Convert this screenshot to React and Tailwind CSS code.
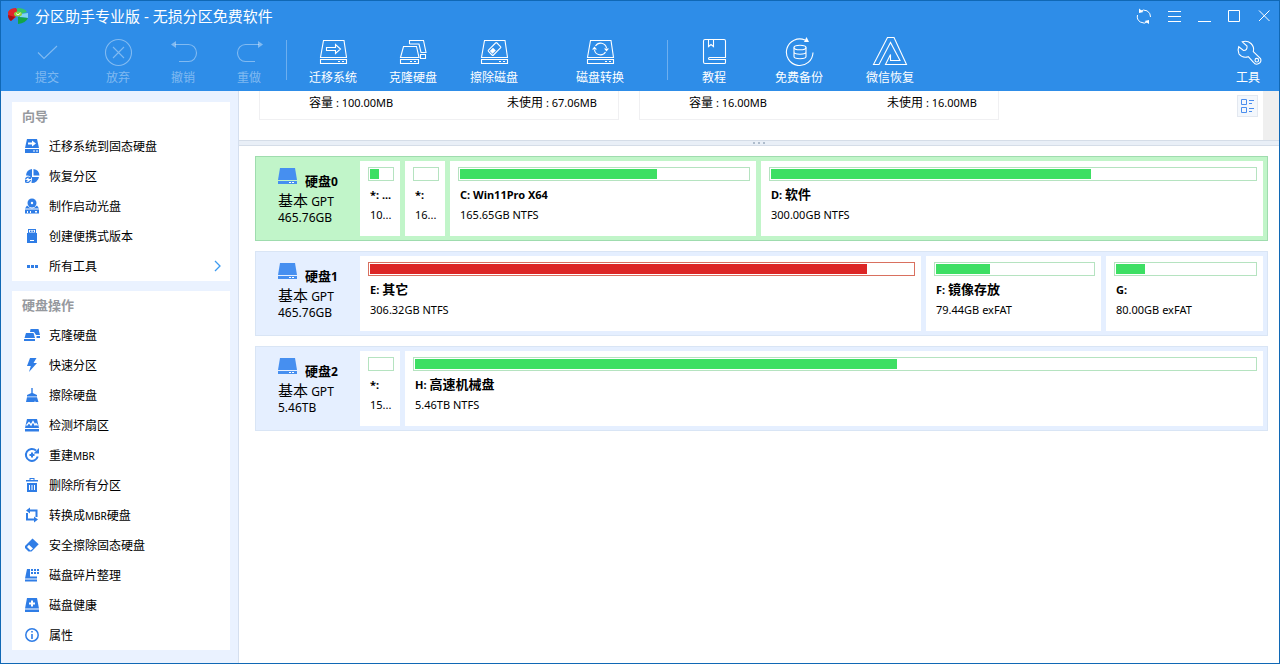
import clsx from 'clsx';

/* ---------- Toolbar icons (36x30 canvas) ---------- */

function ToolSvg({ children }) {
  return (
    <svg viewBox="0 0 36 30" className="h-[30px] w-9" fill="none" stroke="currentColor" strokeWidth="1.1" aria-hidden="true">
      {children}
    </svg>
  );
}

function DriveOutline() {
  return (
    <>
      <path d="M8.5 3.5H29L31.5 20.5H5.5Z" />
      <path d="M5.5 22.5H31.5V26.5H5.5Z" />
      <path d="M23 24.5H25M27 24.5H29" />
    </>
  );
}

const SubmitIcon = () => (
  <ToolSvg>
    <path d="M9 15.5L15 21.5L28 9" />
  </ToolSvg>
);

const DiscardIcon = () => (
  <ToolSvg>
    <circle cx="18.5" cy="15.5" r="13" />
    <path d="M13 10L24 21M24 10L13 21" />
  </ToolSvg>
);

const UndoIcon = () => (
  <ToolSvg>
    <path d="M10 7.5H23.5A8 8.5 0 0 1 23.5 24.5H14" />
    <path d="M6 7.5L11 4V11Z" fill="currentColor" stroke="none" />
  </ToolSvg>
);

const RedoIcon = () => (
  <ToolSvg>
    <path d="M28 7.5H14.5A8 8.5 0 0 0 14.5 24.5H24" />
    <path d="M32 7.5L27 4V11Z" fill="currentColor" stroke="none" />
  </ToolSvg>
);

const MigrateIcon = () => (
  <ToolSvg>
    <DriveOutline />
    <path d="M11.5 10.5H20.5V7.5L25.5 12L20.5 16.5V13.5H11.5Z" />
  </ToolSvg>
);

const CloneIcon = () => (
  <ToolSvg>
    <path d="M8.5 9.5H21.5L24 20.5H5.5Z" />
    <path d="M5.5 22.5H23.5V26.5H5.5Z" />
    <path d="M15 24.5H17M19 24.5H21" />
    <path d="M14.5 7V3.5H28.5L31 15.5H26L24 7H14.5" />
    <path d="M25.5 17.5H30.5V21.5H25.5Z" />
  </ToolSvg>
);

const WipeIcon = () => (
  <ToolSvg>
    <DriveOutline />
    <g transform="rotate(-45 18.5 12)">
      <rect x="12.5" y="8.5" width="12" height="7" rx="1" />
      <rect x="13.8" y="10" width="4.6" height="4" fill="currentColor" stroke="none" />
    </g>
  </ToolSvg>
);

const ConvertIcon = () => (
  <ToolSvg>
    <DriveOutline />
    <path d="M13.5 9A6 6 0 0 1 24.5 11M23.5 15A6 6 0 0 1 12.5 13" />
    <path d="M22 11.5H27L24.5 14.5ZM10 12.5H15L12.5 9.5Z" fill="currentColor" stroke="none" />
  </ToolSvg>
);

const TutorialIcon = () => (
  <ToolSvg>
    <path d="M29.5 20.5V4Q29.5 2.5 28 2.5H9Q7.5 2.5 7.5 4V25Q7.5 26.5 9 26.5H28.5Q29.5 26.5 29.5 25.5V22.5H13.5Q12.5 22.5 12.5 21.5Q12.5 20.5 13.5 20.5Z" />
    <path d="M12.5 2.5V9.5L15 7.5L17.5 9.5V2.5" />
  </ToolSvg>
);

const BackupIcon = () => (
  <ToolSvg>
    <path d="M32 15.5A13.3 13.3 0 1 1 24 3" />
    <path d="M23 5L25.5 0L28 5Z" fill="currentColor" stroke="none" />
    <ellipse cx="19" cy="10.5" rx="6" ry="2.3" />
    <path d="M13 10.5V19.5C13 22.5 25 22.5 25 19.5V10.5M13 15C13 18 25 18 25 15" />
  </ToolSvg>
);

const WechatRecoverIcon = () => (
  <ToolSvg>
    <path d="M1.5 27.5L15.5 0.5H22L34.5 27.5H13.5L18.5 17.5V23.5H28L18.5 5.5L7 27.5Z" />
  </ToolSvg>
);

const ToolsIcon = () => (
  <ToolSvg>
    <path d="M12.3 4.8L17 9Q17.6 13.5 13.5 13.5L8.7 9.7Q7.2 13.5 9 17Q12.5 21.5 18.3 19.7L23.5 25.3A4 4 0 0 0 30.5 21.5L23.3 14.7Q24.6 10 21 6.5Q17 3 12.3 4.8Z" />
    <circle cx="26.8" cy="23.2" r="1.8" />
  </ToolSvg>
);

/* ---------- Sidebar icons (16x16 canvas) ---------- */

function SideSvg({ children }) {
  return (
    <svg viewBox="0 0 16 16" className="size-4 shrink-0 text-[#2f7de6]" fill="currentColor" aria-hidden="true">
      {children}
    </svg>
  );
}

const sideIcons = {
  migrate: (
    <SideSvg>
      <path d="M3 1H13L15 10H1Z" />
      <path d="M1 11H15V15H1Z" />
      <path d="M4 4.5H8V2.5L12 5.5L8 8.5V6.5H4Z" fill="white" />
      <path d="M9 12.5H11V13.5H9ZM12 12.5H14V13.5H12Z" fill="white" />
    </SideSvg>
  ),
  recover: (
    <SideSvg>
      <path d="M8 1A7 7 0 0 0 2 7.5Q6.5 7 8 10.5L7.5 15A7 7 0 0 0 15 9H8Z" />
      <path d="M9.5 1A7 7 0 0 1 15.5 7.5H9.5Z" />
      <path d="M1.5 11.5A3 3 0 0 1 6 9.5M6.5 12A3 3 0 0 1 2 14" fill="none" stroke="currentColor" strokeWidth="1.3" />
      <path d="M4 11H7V8ZM1 15V12H4Z" />
    </SideSvg>
  ),
  bootDisc: (
    <SideSvg>
      <circle cx="8" cy="5" r="4.5" />
      <circle cx="8" cy="5" r="1.2" fill="white" />
      <path d="M3 7.5Q8 13 13 7.5L15 10.5H1Z" />
      <path d="M1 11.5H15V15.5H1Z" />
      <path d="M3 13H4V15H3ZM6 13H7V15H6ZM11 13H13V14.5H11Z" fill="white" />
    </SideSvg>
  ),
  usb: (
    <SideSvg>
      <path d="M4 1H12V5H13V15H3V5H4Z" />
      <path d="M5 2H11V4.5H5Z" fill="white" />
      <path d="M6 2.5H7.5V4H6ZM8.5 2.5H10V4H8.5Z" />
      <path d="M6 12H10V13H6Z" fill="white" />
    </SideSvg>
  ),
  more: (
    <SideSvg>
      <path d="M3 7H6V10H3ZM7 7H10V10H7ZM11 7H14V10H11Z" />
    </SideSvg>
  ),
  clone: (
    <SideSvg>
      <path d="M6.5 2H14.5L16 8H12L10 5H6Z" />
      <path d="M2 6H9.5L11 11H0.5Z" />
      <path d="M0 12H11V14H0ZM12.5 9H16V11H12.5Z" />
    </SideSvg>
  ),
  bolt: (
    <SideSvg>
      <path d="M6 1H12.5L9.5 6H13L5 15L6.8 9H3Z" />
    </SideSvg>
  ),
  broom: (
    <SideSvg>
      <path d="M7.3 1H8.7V6L13 8V9.5H3V8L7.3 6Z" />
      <path d="M3 10.2H13L14.5 15H11.5L11 13.5L10.5 15H2Z" />
    </SideSvg>
  ),
  badSector: (
    <SideSvg>
      <path d="M3 2H13L15 11H1Z" />
      <path d="M1 12H15V14.5H1Z" />
      <path d="M2.5 8.5L5 5.5L7 8L9 4.5L11 8L12 6.5L13.5 8.5" fill="none" stroke="white" strokeWidth="1.3" />
    </SideSvg>
  ),
  rebuild: (
    <SideSvg>
      <path d="M12 3.5A6 6 0 1 0 13.7 9.5" fill="none" stroke="currentColor" strokeWidth="2" />
      <path d="M15 1V6.5H9.5Z" />
      <path d="M7 5.5H9V7H10.5V9H9V10.5H7V9H5.5V7H7Z" />
    </SideSvg>
  ),
  trash: (
    <SideSvg>
      <path d="M5.5 1H10.5V3H14V4.5H2V3H5.5ZM6.5 2V3H9.5V2Z" fillRule="evenodd" />
      <path d="M3 6H13V15H3Z" />
      <path d="M5 8H6V13H5ZM7.5 8H8.5V13H7.5ZM10 8H11V13H10Z" fill="white" />
    </SideSvg>
  ),
  convert: (
    <SideSvg>
      <path d="M5.5 3.5H12.5V10M10 12.5H3V6" fill="none" stroke="currentColor" strokeWidth="2" />
      <path d="M2 3.5L6 0.5V6.5ZM14 12.5L10 9.5V15.5Z" />
    </SideSvg>
  ),
  eraser: (
    <SideSvg>
      <path d="M8.5 1.5L14.7 7.2L7.5 14.5H4.5L1 11V9Z" />
      <path d="M5 7.8L9 11.5L6.5 13.5L3 10Z" fill="white" />
    </SideSvg>
  ),
  defrag: (
    <SideSvg>
      <path d="M3 2H6V9.5H13V11.5H1Z" />
      <path d="M1 12.5H13V14.5H1Z" />
      <path d="M7 2H9V4H7ZM10 2H12V4H10ZM13 2H15V4H13ZM7 5H9V7H7ZM10 5H12V7H10ZM13 5H15V7H13Z" />
    </SideSvg>
  ),
  health: (
    <SideSvg>
      <path d="M3 1H13L15 11.5H1Z" />
      <path d="M1 12.5H15V15H1Z" />
      <path d="M7 3.5H9V5.5H11V7.5H9V9.5H7V7.5H5V5.5H7Z" fill="white" />
    </SideSvg>
  ),
  info: (
    <SideSvg>
      <circle cx="8" cy="8" r="6.2" fill="none" stroke="currentColor" strokeWidth="1.5" />
      <path d="M7.2 4H8.8V5.6H7.2ZM7.2 7H8.8V12H7.2Z" />
    </SideSvg>
  ),
};

/* ---------- Data ---------- */

const pendingTools = [
  { label: '提交', icon: SubmitIcon, width: 'w-[72px]' },
  { label: '放弃', icon: DiscardIcon, width: 'w-[70px]' },
  { label: '撤销', icon: UndoIcon, width: 'w-[60px]' },
  { label: '重做', icon: RedoIcon, width: 'w-[72px]' },
];

const diskTools = [
  { label: '迁移系统', icon: MigrateIcon, width: 'w-[92px]' },
  { label: '克隆硬盘', icon: CloneIcon, width: 'w-[68px]' },
  { label: '擦除磁盘', icon: WipeIcon, width: 'w-[94px]' },
  { label: '磁盘转换', icon: ConvertIcon, width: 'w-[118px]' },
];

const extraTools = [
  { label: '教程', icon: TutorialIcon, width: 'w-[92px]' },
  { label: '免费备份', icon: BackupIcon, width: 'w-[78px]' },
  { label: '微信恢复', icon: WechatRecoverIcon, width: 'w-[104px]' },
];

const wizards = [
  { label: '迁移系统到固态硬盘', icon: 'migrate' },
  { label: '恢复分区', icon: 'recover' },
  { label: '制作启动光盘', icon: 'bootDisc' },
  { label: '创建便携式版本', icon: 'usb' },
  { label: '所有工具', icon: 'more', hasMenu: true },
];

const diskActions = [
  { label: '克隆硬盘', icon: 'clone' },
  { label: '快速分区', icon: 'bolt' },
  { label: '擦除硬盘', icon: 'broom' },
  { label: '检测坏扇区', icon: 'badSector' },
  { label: '重建MBR', icon: 'rebuild' },
  { label: '删除所有分区', icon: 'trash' },
  { label: '转换成MBR硬盘', icon: 'convert' },
  { label: '安全擦除固态硬盘', icon: 'eraser' },
  { label: '磁盘碎片整理', icon: 'defrag' },
  { label: '磁盘健康', icon: 'health' },
  { label: '属性', icon: 'info' },
];

const volumes = [
  { capacity: '100.00MB', unused: '67.06MB' },
  { capacity: '16.00MB', unused: '16.00MB' },
];

// weight: share of the row that is left after paddings and fixed-width slivers
const disks = [
  {
    name: '硬盘0',
    size: '465.76GB',
    selected: true,
    partitions: [
      { name: '*: ...', info: '10...', used: 40 },
      { name: '*:', info: '16...', used: 0 },
      { name: 'C: Win11Pro X64', info: '165.65GB NTFS', used: 68.4, weight: 292 },
      { name: 'D: 软件', info: '300.00GB NTFS', used: 66.1, weight: 488 },
    ],
  },
  {
    name: '硬盘1',
    size: '465.76GB',
    partitions: [
      { name: 'E: 其它', info: '306.32GB NTFS', used: 91.5, weight: 547 },
      { name: 'F: 镜像存放', info: '79.44GB exFAT', used: 34.4, weight: 161 },
      { name: 'G:', info: '80.00GB exFAT', used: 20.9, weight: 143 },
    ],
  },
  {
    name: '硬盘2',
    size: '5.46TB',
    partitions: [
      { name: '*:', info: '15...', used: 0 },
      { name: 'H: 高速机械盘', info: '5.46TB NTFS', used: 57.4, weight: 844 },
    ],
  },
];

// Latin runs are set smaller than the Chinese text around them
function MixedText({ text, latin }) {
  return text.split(/([\x20-\x7e]+)/).map((run, i) => (
    <span key={i} className={clsx('whitespace-pre', i % 2 === 1 && latin)}>
      {run}
    </span>
  ));
}

/* ---------- Header ---------- */

function AppLogo() {
  return (
    <svg viewBox="0 0 20 16" className="h-4 w-5" aria-hidden="true">
      <path d="M0 4Q2 0 8 0L10 3L6 6L8 9L3 13Q0 11 0 4Z" fill="#e0262b" />
      <path d="M0 7L7 9L3 13Q0 11 0 7Z" fill="#a80f16" />
      <path d="M9 0Q17 0 19 4L12 6L9 4Z" fill="#35c46a" />
      <path d="M20 5V10L12 9V6Z" fill="#7fd4f2" />
      <path d="M10 9L20 10Q18 15 10 16Z" fill="#12a548" />
      <ellipse cx="10" cy="6" rx="4" ry="2.5" fill="#8ed13a" />
      <path d="M8 5.5L10 7L12.5 5" stroke="white" fill="none" />
    </svg>
  );
}

function WindowButton({ label, children }) {
  return (
    <button type="button" aria-label={label} className="flex h-[30px] w-[30px] items-center justify-center">
      <svg viewBox="0 0 16 16" className="size-4" fill="none" stroke="currentColor" aria-hidden="true">
        {children}
      </svg>
    </button>
  );
}

function ToolButton({ label, icon: Icon, width, disabled }) {
  return (
    <button
      type="button"
      disabled={disabled}
      className={clsx('flex shrink-0 flex-col items-center text-xs leading-[22px]', width, disabled ? 'text-white/40' : 'text-white')}
    >
      <Icon />
      <span>{label}</span>
    </button>
  );
}

function Header() {
  return (
    <header className="bg-[#2e8de8] pb-[2px] text-white">
      <div className="flex h-[30px] items-center">
        <div className="flex flex-1 items-center gap-[7px] pl-[7px]">
          <AppLogo />
          <h1 className="text-[15px] leading-5">分区助手专业版 - 无损分区免费软件</h1>
        </div>
        <WindowButton label="刷新">
          <path d="M4 3.5A6.5 6.5 0 0 1 14.5 9M12 13.5A6.5 6.5 0 0 1 1.5 7" />
          <path d="M3 0.5V5L7.5 4ZM13 16V12L8.5 13Z" fill="currentColor" stroke="none" />
        </WindowButton>
        <WindowButton label="菜单">
          <path d="M2 3.5H15M2 8.5H15M2 13.5H15" />
        </WindowButton>
        <WindowButton label="最小化">
          <path d="M2 13.5H15" />
        </WindowButton>
        <WindowButton label="最大化">
          <path d="M2.5 2.5H13.5V13.5H2.5Z" />
        </WindowButton>
        <WindowButton label="关闭">
          <path d="M3 2.5L13.5 13M13.5 2.5L3 13" />
        </WindowButton>
      </div>
      <div className="flex pt-[6px] pr-[7px] pl-[10px]">
        {pendingTools.map((tool) => (
          <ToolButton key={tool.label} {...tool} disabled />
        ))}
        <div className="mt-[3px] ml-px h-10 w-px bg-white/30" />
        {diskTools.map((tool) => (
          <ToolButton key={tool.label} {...tool} />
        ))}
        <div className="mt-[3px] ml-2 h-10 w-px bg-white/30" />
        {extraTools.map((tool) => (
          <ToolButton key={tool.label} {...tool} />
        ))}
        <div className="flex-1" />
        <ToolButton label="工具" icon={ToolsIcon} width="w-12" />
      </div>
    </header>
  );
}

/* ---------- Sidebar ---------- */

function SidePanel({ title, items }) {
  return (
    <section className="bg-white">
      <h2 className="pl-[10px] text-[13px] leading-[29px] font-bold text-[#96999e]">{title}</h2>
      <ul>
        {items.map((item) => (
          <li key={item.label}>
            <button type="button" className="flex h-[30px] w-full items-center gap-[9px] pr-[9px] pl-3 text-left text-xs text-black">
              {sideIcons[item.icon]}
              <span className="flex-1 pt-[2px]">
                <MixedText text={item.label} latin="text-[10px]" />
              </span>
              {item.hasMenu && (
                <svg viewBox="0 0 8 12" className="h-3 w-2" fill="none" stroke="#3d9bf0" strokeWidth="1.3" aria-hidden="true">
                  <path d="M2 1L7 6L2 11" />
                </svg>
              )}
            </button>
          </li>
        ))}
      </ul>
    </section>
  );
}

/* ---------- Main area ---------- */

function VolumePane() {
  return (
    <div className="flex h-[49px] items-start overflow-hidden pl-5">
      <div className="flex flex-1 gap-5">
        {volumes.map((volume) => (
          <div key={volume.capacity} className="flex h-[29px] w-[360px] border-x border-b border-[#f0f0f2] pl-[49px] text-[11px] leading-6">
            <span className="w-[198px]">
              <span className="text-xs">容量</span> : {volume.capacity}
            </span>
            <span>
              <span className="text-xs">未使用</span> : {volume.unused}
            </span>
          </div>
        ))}
      </div>
      <button
        type="button"
        aria-label="视图"
        className="mt-1 mr-[5px] flex h-[22px] w-[21px] items-center justify-center border border-[#e3e8f0] bg-[#f3f7fc]"
      >
        <svg viewBox="0 0 13 16" className="h-4 w-[13px]" fill="none" stroke="#4a8eee" aria-hidden="true">
          <path d="M0.5 1.5H5.5V6.5H0.5ZM0.5 9.5H5.5V14.5H0.5Z" />
          <path d="M8 2.5H13M8 5.5H11M8 10.5H13M8 13.5H11" />
        </svg>
      </button>
      <div className="h-full w-4 bg-[#efefef]" />
    </div>
  );
}

function Splitter() {
  return (
    <div className="flex h-[6px] items-center justify-center gap-[3px] border-y border-[#d5dde8] bg-[#e9eff7]">
      <span className="size-[2px] bg-[#aebccc]" />
      <span className="size-[2px] bg-[#aebccc]" />
      <span className="size-[2px] bg-[#aebccc]" />
    </div>
  );
}

function Partition({ name, info, used, weight }) {
  const full = used > 90;
  return (
    <div
      className={clsx('bg-white pt-[6px] pr-[6px] pb-3 pl-2', weight ? 'min-w-0 basis-0' : 'w-10 shrink-0')}
      style={weight ? { flexGrow: weight } : undefined}
    >
      <div className={clsx('h-[14px] border p-px', full ? 'border-[#d9705f]' : 'border-[#b5e3c0]')}>
        <div className={clsx('h-full', full ? 'bg-[#dc2626]' : 'bg-[#3ddf63]')} style={{ width: `${used}%` }} />
      </div>
      <p className="mt-[2px] h-[22px] pl-[2px] text-[13px] leading-[22px] font-bold whitespace-nowrap">
        <MixedText text={name} latin="text-[11px]" />
      </p>
      <p className="pl-[2px] text-[11px] leading-[19px] whitespace-nowrap">{info}</p>
    </div>
  );
}

function DiskRow({ name, size, selected, partitions }) {
  return (
    <li
      className={clsx(
        'flex gap-[5px] border p-1',
        selected ? 'border-[#9fdcae] bg-[#c1f5c9]' : 'border-[#d9e5f5] bg-[#e5efff]',
      )}
    >
      <div className="w-[95px] shrink-0 pl-[18px] text-xs">
        <div className="flex items-start gap-2 pt-[7px]">
          <svg viewBox="0 0 19 16" className="h-4 w-[19px]" fill="#468ff0" aria-hidden="true">
            <path d="M2 0H17L19 12H0Z" />
            <path d="M0 13H19V16H0Z" />
            <path d="M11 14H13V15H11ZM14 14H16V15H14Z" fill="white" />
          </svg>
          <span className="pt-1 text-[13px] leading-[18px] font-bold">
            <MixedText text={name} latin="text-xs" />
          </span>
        </div>
        <p className="h-5 leading-5">
          <span className="text-[15px]">基本</span> GPT
        </p>
        <p className="leading-4">{size}</p>
      </div>
      {partitions.map((partition) => (
        <Partition key={partition.info} {...partition} />
      ))}
    </li>
  );
}

export default function App() {
  return (
    <div className="flex min-h-screen flex-col border border-[#1068b5] bg-white font-['Noto_Sans','Noto_Sans_CJK_SC',sans-serif] text-black">
      <Header />
      <div className="flex flex-1">
        <aside className="flex w-[238px] shrink-0 flex-col gap-[10px] border-r border-[#d5dfee] bg-[#eaf2ff] pt-[11px] pr-2 pb-[13px] pl-[11px]">
          <SidePanel title="向导" items={wizards} />
          <SidePanel title="硬盘操作" items={diskActions} />
        </aside>
        <main className="min-w-0 flex-1">
          <VolumePane />
          <Splitter />
          <ul className="flex flex-col gap-[10px] pt-[10px] pr-[11px] pl-4">
            {disks.map((disk) => (
              <DiskRow key={disk.name} {...disk} />
            ))}
          </ul>
        </main>
      </div>
    </div>
  );
}
